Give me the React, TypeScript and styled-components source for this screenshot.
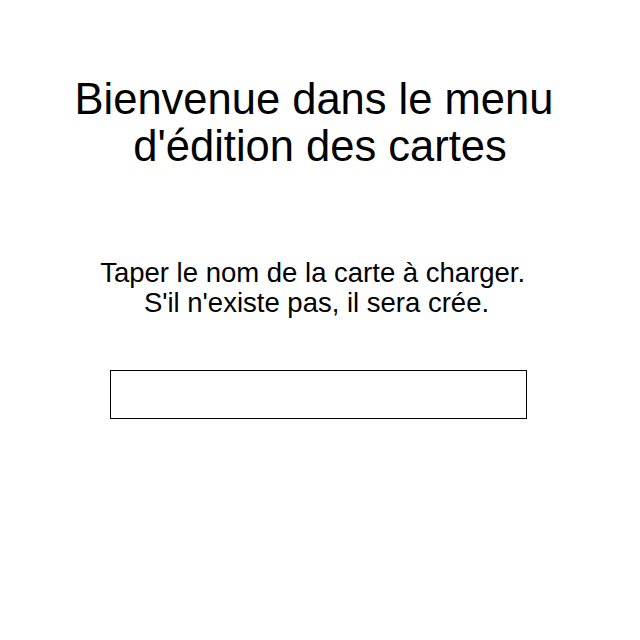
import React from 'react';
import styled, { createGlobalStyle } from 'styled-components';

const GlobalStyle = createGlobalStyle`
	html, body {
		margin: 0;
		padding: 0;
		background: #ffffff;
	}
	body {
		font-family: 'Liberation Sans', Arial, sans-serif;
		color: #000000;
	}
`;

export default function App() {
	return (
		<>
			<GlobalStyle />
			<Page>
				<Title>
					Bienvenue dans le menu&nbsp;
					<br />
					d'édition des cartes
				</Title>
				<Hint>
					Taper le nom de la carte à charger.&nbsp;
					<br />
					S'il n'existe pas, il sera crée.
				</Hint>
				<MapNameInput type="text" />
			</Page>
		</>
	);
}

const Page = styled.div`
	width: 640px;
	height: 640px;
	display: flex;
	flex-direction: column;
	align-items: center;
	padding-top: 76px;
	box-sizing: border-box;
`;

const Title = styled.h1`
	margin: 0;
	font-size: 43.5px;
	font-weight: normal;
	line-height: 47px;
	text-align: center;
	white-space: nowrap;
`;

const Hint = styled.p`
	margin: 88px 7px 0 0;
	font-size: 27.5px;
	line-height: 30px;
	text-align: center;
	white-space: nowrap;
`;

const MapNameInput = styled.input`
	margin: 52px 4px 0 0;
	width: 417px;
	height: 49px;
	box-sizing: border-box;
	border: 1px solid #000000;
	border-radius: 0;
	outline: none;
	padding: 0 6px;
	font-family: 'Liberation Sans', Arial, sans-serif;
	font-size: 20px;
	background: #ffffff;
`;
